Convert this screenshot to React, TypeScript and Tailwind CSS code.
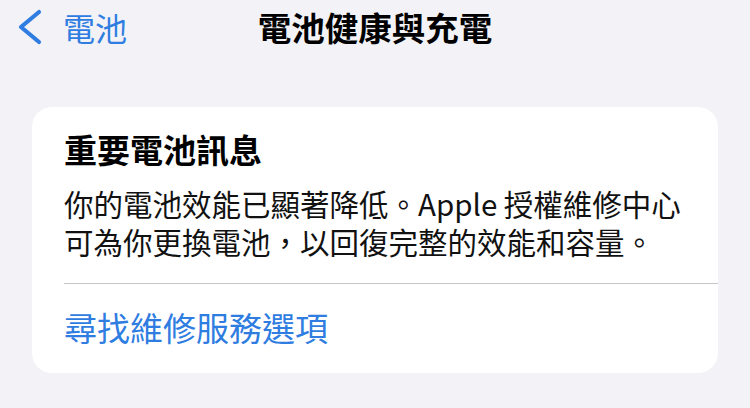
const font = {
  fontFamily: '"Noto Sans CJK TC", "Noto Sans", sans-serif',
};

function BackChevron() {
  return (
    <svg width="30" height="36" viewBox="0 0 30 36" fill="none">
      <polyline
        points="25,3 7,18 25,33"
        stroke="currentColor"
        strokeWidth="4.2"
        strokeLinecap="round"
        strokeLinejoin="round"
      />
    </svg>
  );
}

function NavBar() {
  return (
    <div className="grid h-[54px] grid-cols-[1fr_auto_1fr] items-center">
      <div className="flex items-center pl-[14px] text-[#2f7de1]">
        <BackChevron />
        <span className="ml-[19px] text-[32px] leading-none">電池</span>
      </div>
      <div className="text-[33.5px] font-bold leading-none text-black">電池健康與充電</div>
      <div />
    </div>
  );
}

function BatteryNotice() {
  return (
    <div className="mx-[32px] mt-[53px] rounded-[20px] bg-white pt-[22px] pb-[26px]">
      <div className="px-[32px]">
        <h2 className="text-[33px] font-bold leading-[40px] text-black">重要電池訊息</h2>
        <p className="mt-[15px] text-[29.5px] leading-[38px] text-[#111]">
          你的電池效能已顯著降低。Apple 授權維修中心
          <br />
          可為你更換電池，以回復完整的效能和容量。
        </p>
      </div>
      <div className="ml-[32px] mt-[23px] h-px bg-[#c6c6c8]" />
      <div className="px-[32px] pt-[23px] text-[33px] leading-[40px] text-[#2f7de1]">
        尋找維修服務選項
      </div>
    </div>
  );
}

export default function App() {
  return (
    <div className="h-[408px] w-[750px] overflow-hidden bg-[#f2f2f7]" style={font}>
      <NavBar />
      <BatteryNotice />
    </div>
  );
}
